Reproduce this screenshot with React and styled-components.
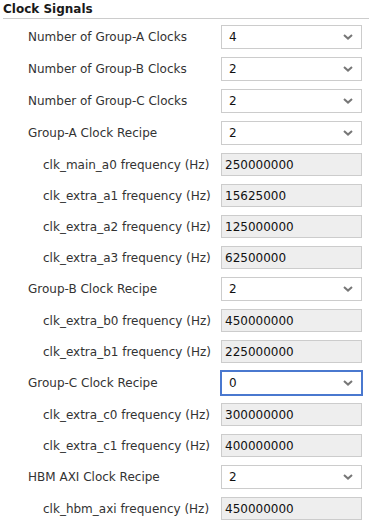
import React from "react"
import styled, { createGlobalStyle } from "styled-components"

const GlobalStyle = createGlobalStyle`
  html, body {
    margin: 0;
    padding: 0;
    background: #ffffff;
  }
  body {
    font-family: "DejaVu Sans", Verdana, sans-serif;
    font-size: 12px;
    color: #333333;
  }
`

const Panel = styled.div`
  width: 369px;
  padding: 2px 7px 0 3px;
  box-sizing: border-box;
`

const Title = styled.div`
  font-weight: bold;
  font-size: 12px;
  line-height: 14px;
  color: #1a1a1a;
  padding-bottom: 2px;
  border-bottom: 1px solid #cccccc;
  margin-right: -7px;
`

const Fields = styled.div`
  display: grid;
  grid-template-columns: 1fr 141px;
  row-gap: 8px;
  align-items: center;
  margin-top: 6px;
`

const Label = styled.div`
  padding-left: ${props => (props.sub ? "40px" : "25px")};
  white-space: nowrap;
  line-height: 14px;
  color: #333333;
`

const SelectBox = styled.div`
  position: relative;
  height: 24px;
  box-sizing: border-box;
  border: 1px solid ${props => (props.focused ? "#4a78cf" : "#cccccc")};
  box-shadow: ${props => (props.focused ? "0 0 0 1px #4a78cf" : "none")};
  background: #ffffff;
  display: flex;
  align-items: center;
  justify-content: space-between;
  padding: 0 8px 0 7px;
  color: #111111;
`

const ReadOnly = styled.div`
  height: 23px;
  box-sizing: border-box;
  border: 1px solid #cccccc;
  background: #eeeeee;
  display: flex;
  align-items: center;
  padding-left: 3px;
  color: #111111;
`

const Chevron = () => (
  <svg width="10" height="6" viewBox="0 0 10 6">
    <path d="M1 1 L5 4.6 L9 1" fill="none" stroke="#777777" strokeWidth="2" />
  </svg>
)

const fields = [
  { label: "Number of Group-A Clocks", select: "4" },
  { label: "Number of Group-B Clocks", select: "2" },
  { label: "Number of Group-C Clocks", select: "2" },
  { label: "Group-A Clock Recipe", select: "2" },
  { label: "clk_main_a0 frequency (Hz)", value: "250000000" },
  { label: "clk_extra_a1 frequency (Hz)", value: "15625000" },
  { label: "clk_extra_a2 frequency (Hz)", value: "125000000" },
  { label: "clk_extra_a3 frequency (Hz)", value: "62500000" },
  { label: "Group-B Clock Recipe", select: "2" },
  { label: "clk_extra_b0 frequency (Hz)", value: "450000000" },
  { label: "clk_extra_b1 frequency (Hz)", value: "225000000" },
  { label: "Group-C Clock Recipe", select: "0", focused: true },
  { label: "clk_extra_c0 frequency (Hz)", value: "300000000" },
  { label: "clk_extra_c1 frequency (Hz)", value: "400000000" },
  { label: "HBM AXI Clock Recipe", select: "2" },
  { label: "clk_hbm_axi frequency (Hz)", value: "450000000" },
]

const App = () => {
  return (
    <Panel>
      <GlobalStyle />
      <Title>Clock Signals</Title>
      <Fields>
        {fields.map(f => (
          <React.Fragment key={f.label}>
            <Label sub={f.value !== undefined}>{f.label}</Label>
            {f.select !== undefined ? (
              <SelectBox focused={f.focused}>
                <span>{f.select}</span>
                <Chevron />
              </SelectBox>
            ) : (
              <ReadOnly>{f.value}</ReadOnly>
            )}
          </React.Fragment>
        ))}
      </Fields>
    </Panel>
  )
}

export default App
